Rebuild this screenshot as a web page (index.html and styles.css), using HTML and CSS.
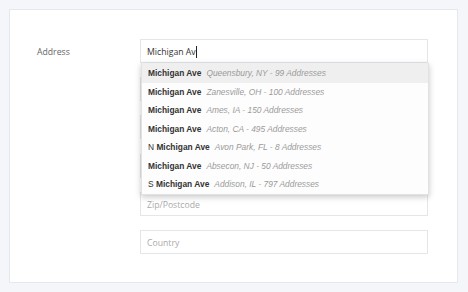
FILE: index.html
```html
<!DOCTYPE html>
<html>
  <head>
    <title>Address Lookup</title>
    <meta name="viewport" content="width=device-width, initial-scale=1.0" />
    <link rel="stylesheet" href="styles.css">
  </head>

  <body>
    <div class="card">
      <div class="form-row">
        <div class="label">Address</div>
        <div class="fields">
          <div class="lookup">
            <div class="field typed">Michigan Av<span class="caret"></span></div>
            <div class="suggestions">
              <div class="suggestion active"><b>Michigan Ave</b><i>Queensbury, NY - 99 Addresses</i></div>
              <div class="suggestion"><b>Michigan Ave</b><i>Zanesville, OH - 100 Addresses</i></div>
              <div class="suggestion"><b>Michigan Ave</b><i>Ames, IA - 150 Addresses</i></div>
              <div class="suggestion"><b>Michigan Ave</b><i>Acton, CA - 495 Addresses</i></div>
              <div class="suggestion">N <b>Michigan Ave</b><i>Avon Park, FL - 8 Addresses</i></div>
              <div class="suggestion"><b>Michigan Ave</b><i>Absecon, NJ - 50 Addresses</i></div>
              <div class="suggestion">S <b>Michigan Ave</b><i>Addison, IL - 797 Addresses</i></div>
            </div>
          </div>
          <input class="field" type="text" placeholder="Address line 2">
          <input class="field" type="text" placeholder="City">
          <input class="field" type="text" placeholder="State/County">
          <input class="field" type="text" placeholder="Zip/Postcode">
          <input class="field" type="text" placeholder="Country">
        </div>
      </div>
    </div>
  </body>
</html>
```
FILE: styles.css
```css
* {
  box-sizing: border-box;
}
body {
  margin: 0;
  padding: 9px;
  background: #f4f6fa;
  font-family: "Open Sans", sans-serif;
}
.card {
  width: 449px;
  height: 274px;
  background: #fff;
  border: 1px solid #e5e8ee;
  padding: 29px 29px 29px 27px;
}
.form-row {
  display: flex;
}
.label {
  width: 103px;
  height: 24px;
  padding-top: 2px;
  line-height: 22px;
  font-size: 8.7px;
  color: #666;
}
.fields {
  flex: 1;
  display: flex;
  flex-direction: column;
  gap: 14.2px;
}
.lookup {
  position: relative;
}
.field {
  display: block;
  width: 100%;
  height: 24px;
  margin: 0;
  padding: 3px 6px 0;
  border: 1px solid #e3e6ea;
  border-radius: 0;
  background: #fff;
  font-family: "Open Sans", sans-serif;
  font-size: 8.7px;
  line-height: 19px;
  color: #333;
  outline: none;
}
.field::placeholder {
  color: #aaa;
}
.caret {
  display: inline-block;
  width: 1px;
  height: 12px;
  background: #222;
  vertical-align: middle;
  margin-top: -2px;
}
.suggestions {
  position: absolute;
  top: 24px;
  left: 1px;
  width: 288px;
  padding-top: 1px;
  background: #fdfdfd;
  box-shadow: 0 2px 6px rgba(0, 0, 0, 0.22);
  border: 1px solid #e2e2e2;
  border-top: none;
  z-index: 2;
}
.suggestion {
  height: 18.5px;
  line-height: 18.5px;
  padding-left: 6px;
  font-family: "Liberation Sans", Arial, sans-serif;
  font-size: 8.4px;
  color: #333;
  white-space: nowrap;
}
.suggestion.active {
  background: #efefef;
  margin-top: -1px;
  height: 19.5px;
  padding-top: 1px;
}
.suggestion b {
  font-weight: bold;
  color: #333;
}
.suggestion i {
  font-style: italic;
  color: #9a9a9a;
  margin-left: 5px;
}
```
